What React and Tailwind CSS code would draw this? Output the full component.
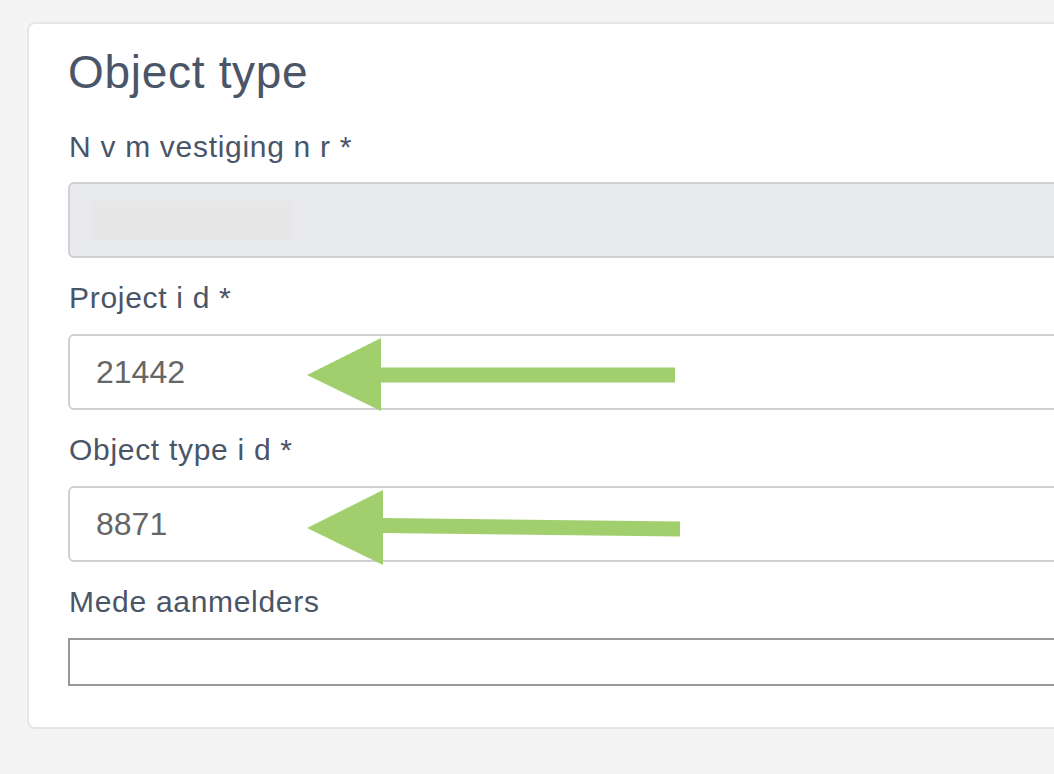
import React from "react";

const font = { fontFamily: '"Liberation Sans", Arial, sans-serif' };

function Label({ children, mb = "mb-[18px]" }) {
  return (
    <div className={"h-[36px] text-[30px] leading-[36px] text-[#4a5568] tracking-[0.7px] pl-[1px] " + mb}>
      {children}
    </div>
  );
}

function Field({ label, value }) {
  return (
    <div className="mt-[22px]">
      <Label>{label}</Label>
      <div className="h-[76px] rounded-[6px] border-2 border-[#d0d0d0] bg-white flex items-center pl-[26px] text-[32px] text-[#666666]">
        {value}
      </div>
    </div>
  );
}

export default function App() {
  return (
    <div className="relative w-[1054px] h-[774px] overflow-hidden bg-[#f4f4f4]" style={font}>
      <div className="ml-[27px] mt-[22px] w-[1100px] rounded-[8px] border-2 border-[#e6e6e6] bg-white pl-[39px] pt-[20px] pb-[41px]">
        <h1 className="h-[56px] text-[46px] leading-[56px] text-[#4a5568] font-normal tracking-[0.7px]">Object type</h1>

        <div className="mt-[29px]">
          <div className="h-[36px] text-[30px] leading-[36px] text-[#4a5568] tracking-[0.7px] pl-[1px] mb-[17px]">
            N v m vestiging n r *
          </div>
          <div className="h-[76px] rounded-[6px] border-2 border-[#d0d0d0] bg-[#e9eaee] flex items-center pl-[22px]">
            <div className="w-[200px] h-[39px] bg-[#e7e7e7]" />
          </div>
        </div>

        <Field label="Project i d *" value="21442" />
        <Field label="Object type i d *" value="8871" />

        <div className="mt-[22px]">
          <Label>Mede aanmelders</Label>
          <div className="h-[48px] border-2 border-[#999999] bg-white" />
        </div>
      </div>

      <svg className="absolute left-0 top-0" width="1054" height="774" viewBox="0 0 1054 774">
        <polygon points="307,375 381,338 381,411" fill="#a2cf6e" />
        <rect x="380" y="367.5" width="295" height="15" fill="#a2cf6e" />
        <polygon points="307,528 383,490 383,565" fill="#a2cf6e" />
        <polygon points="382,518 680,521.5 680,536.5 382,533" fill="#a2cf6e" />
      </svg>
    </div>
  );
}
